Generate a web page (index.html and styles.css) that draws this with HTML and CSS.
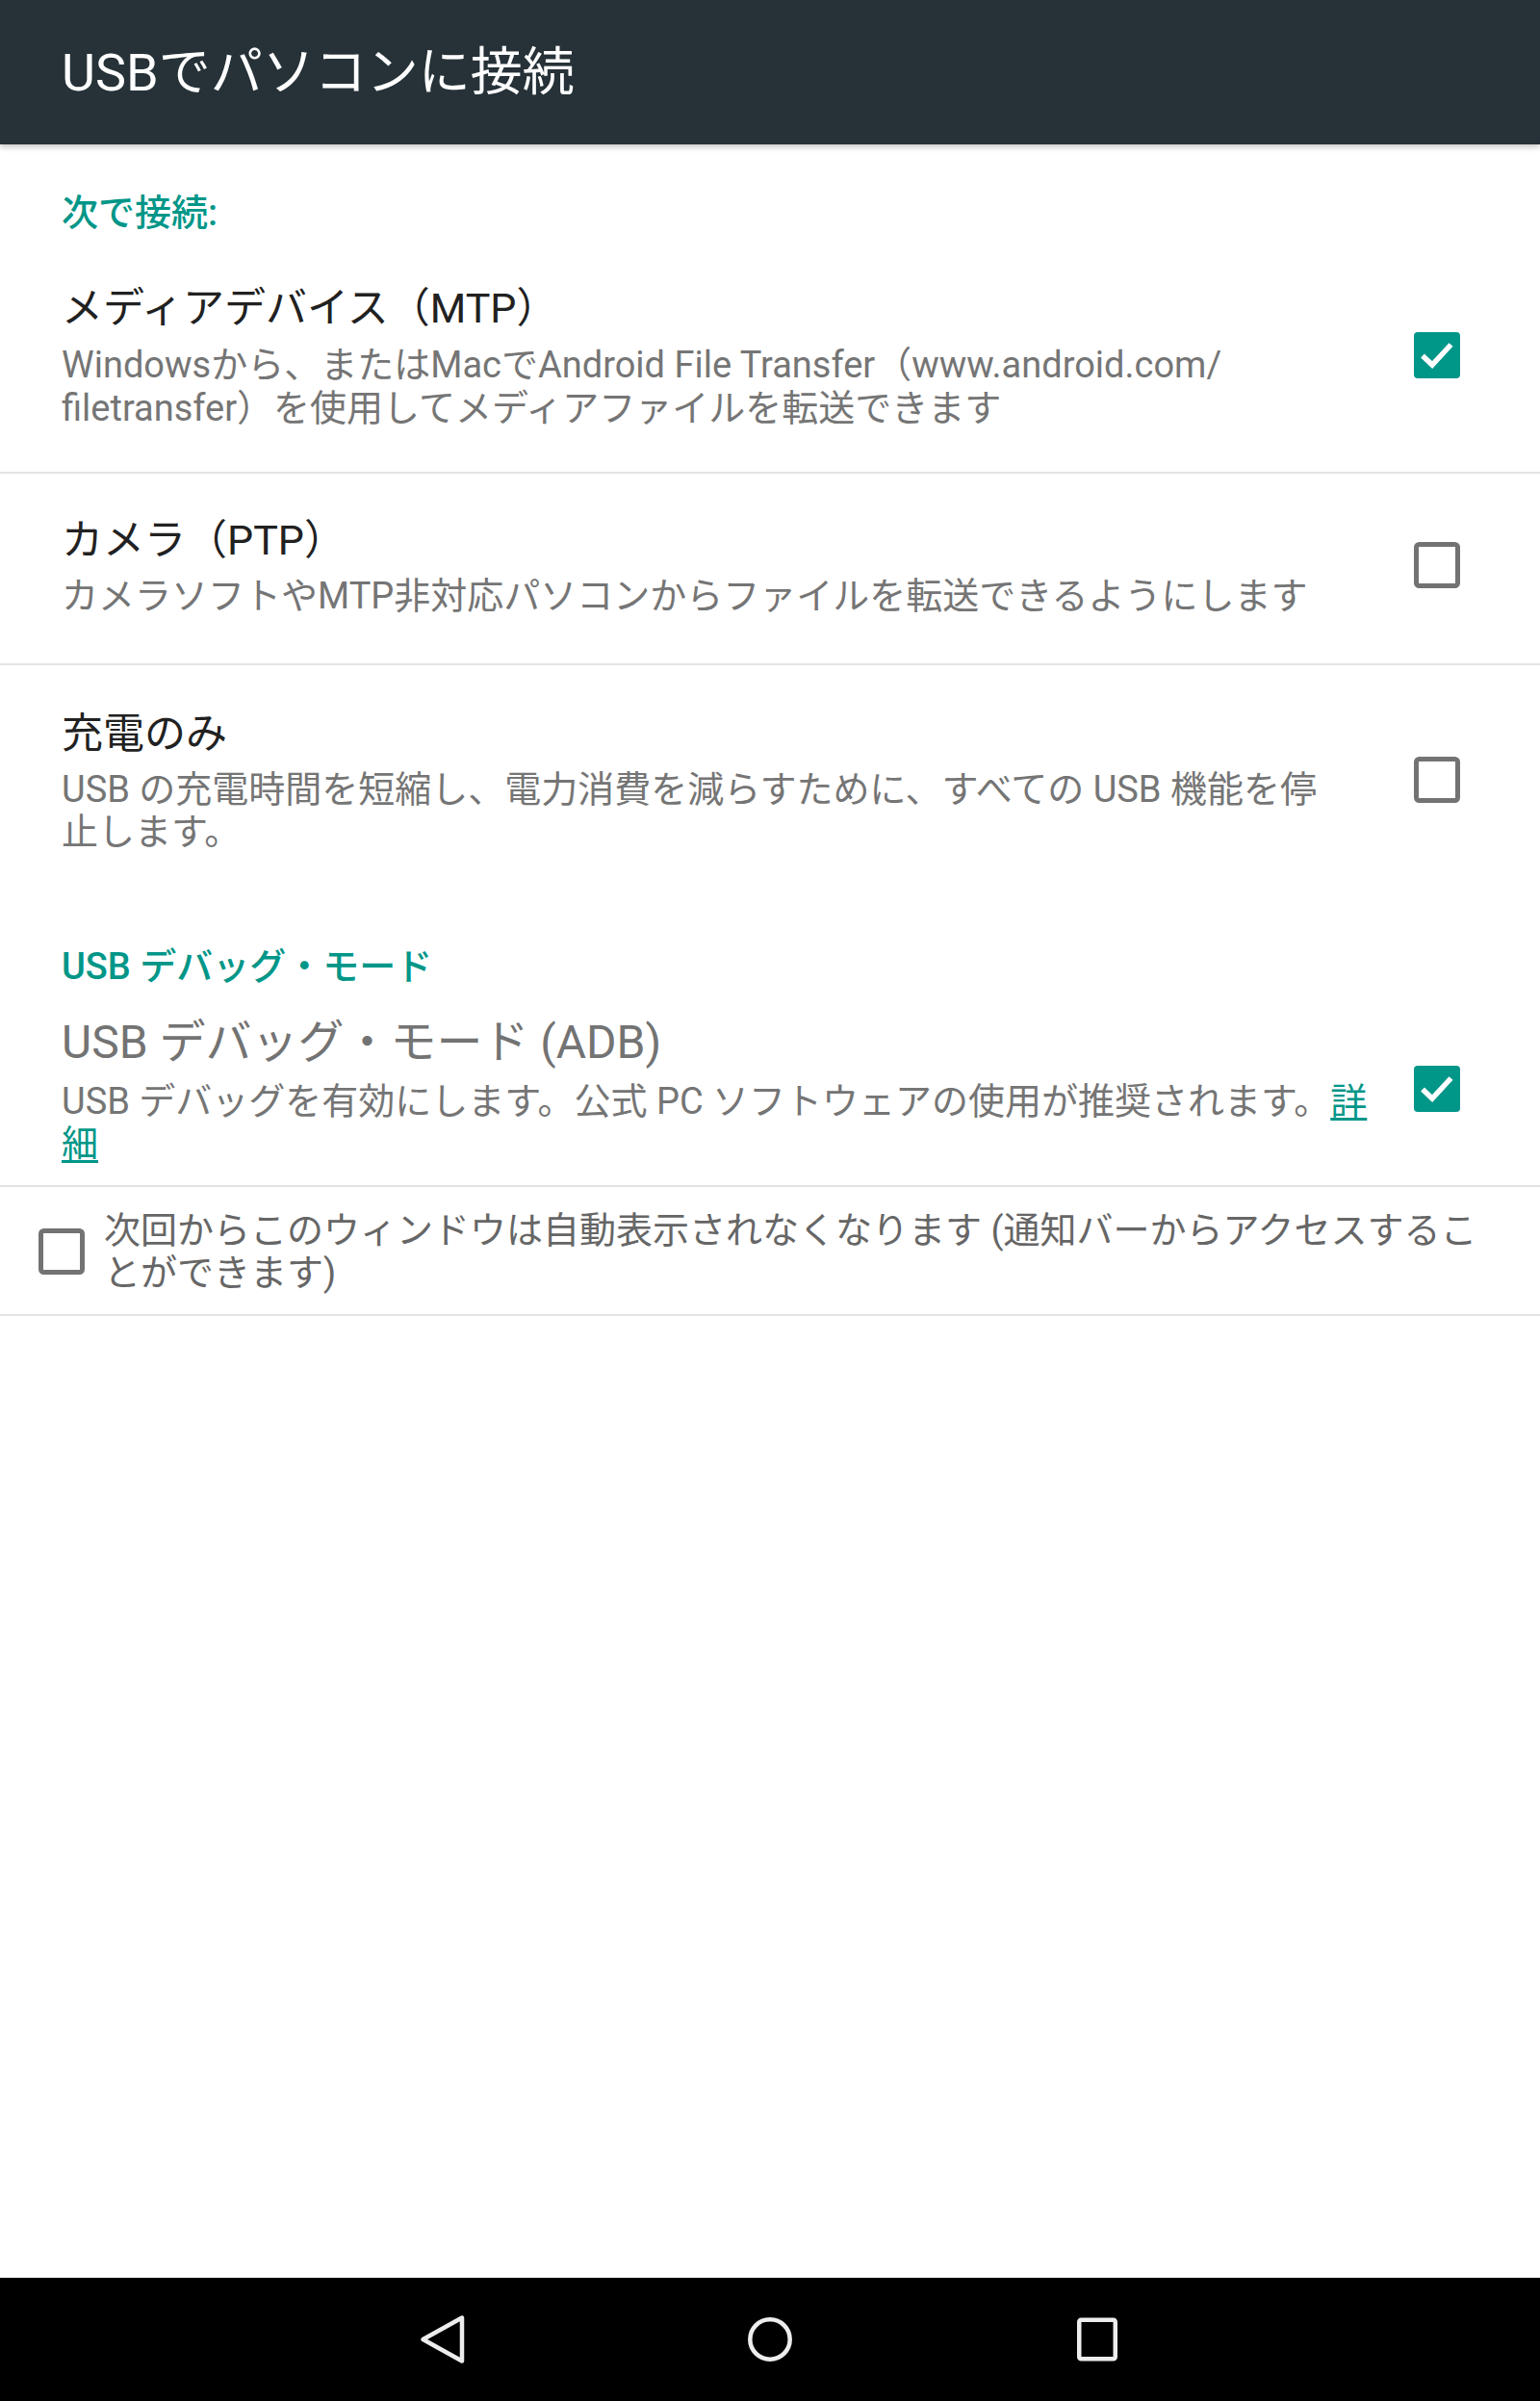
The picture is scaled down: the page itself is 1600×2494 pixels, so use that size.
FILE: index.html
```html
<!DOCTYPE html>
<html lang="ja">
<head>
<meta charset="utf-8">
<title>USBでパソコンに接続</title>
<link rel="stylesheet" href="styles.css">
</head>
<body>
<div class="screen">
  <header class="appbar"><h1 class="appbar-title">USBでパソコンに接続</h1></header>
  <main class="content">
    <div class="category c1">次で接続:</div>

    <div class="pref p1 sep">
      <div class="pref-text">
        <div class="pref-title">メディアデバイス（MTP）</div>
        <div class="pref-summary">Windowsから、またはMacでAndroid File Transfer（www.android.com/<br>filetransfer）を使用してメディアファイルを転送できます</div>
      </div>
      <svg class="cb" viewBox="0 0 48 48" width="48" height="48"><rect x="0" y="0" width="48" height="48" rx="4" fill="#009688"/><polyline points="9,24.5 19,34 38.5,13" fill="none" stroke="#fff" stroke-width="5.5"/></svg>
    </div>

    <div class="pref sep">
      <div class="pref-text">
        <div class="pref-title">カメラ（PTP）</div>
        <div class="pref-summary">カメラソフトやMTP非対応パソコンからファイルを転送できるようにします</div>
      </div>
      <svg class="cb" viewBox="0 0 48 48" width="48" height="48"><rect x="2.5" y="2.5" width="43" height="43" rx="3" fill="none" stroke="#737373" stroke-width="5"/></svg>
    </div>

    <div class="pref p3">
      <div class="pref-text">
        <div class="pref-title">充電のみ</div>
        <div class="pref-summary">USB の充電時間を短縮し、電力消費を減らすために、すべての USB 機能を停<br>止します。</div>
      </div>
      <svg class="cb" viewBox="0 0 48 48" width="48" height="48"><rect x="2.5" y="2.5" width="43" height="43" rx="3" fill="none" stroke="#737373" stroke-width="5"/></svg>
    </div>

    <div class="category c2">USB デバッグ・モード</div>

    <div class="pref adb sep">
      <div class="pref-text">
        <div class="pref-title adb-title">USB デバッグ・モード (ADB)</div>
        <div class="pref-summary">USB デバッグを有効にします。公式 PC ソフトウェアの使用が推奨されます。<a class="link" href="#">詳<br>細</a></div>
      </div>
      <svg class="cb" viewBox="0 0 48 48" width="48" height="48"><rect x="0" y="0" width="48" height="48" rx="4" fill="#009688"/><polyline points="9,24.5 19,34 38.5,13" fill="none" stroke="#fff" stroke-width="5.5"/></svg>
    </div>

    <div class="dontshow sep">
      <svg class="cb-left" viewBox="0 0 48 48" width="48" height="48"><rect x="2.5" y="2.5" width="43" height="43" rx="3" fill="none" stroke="#737373" stroke-width="5"/></svg>
      <div class="dontshow-text">次回からこのウィンドウは自動表示されなくなります (通知バーからアクセスするこ<br>とができます)</div>
    </div>
  </main>
  <nav class="navbar">
    <div class="navbtn">
      <svg viewBox="0 0 60 60" width="60" height="60"><polygon points="9.5,30 50,7.5 50,52.5" fill="none" stroke="#ededed" stroke-width="4.5" stroke-linejoin="round"/></svg>
    </div>
    <div class="navbtn">
      <svg viewBox="0 0 60 60" width="60" height="60"><circle cx="30" cy="30" r="20.7" fill="none" stroke="#ededed" stroke-width="4.5"/></svg>
    </div>
    <div class="navbtn">
      <svg viewBox="0 0 60 60" width="60" height="60"><rect x="11.25" y="9.75" width="37.5" height="40.5" rx="2" fill="none" stroke="#ededed" stroke-width="4.5"/></svg>
    </div>
  </nav>
</div>
</body>
</html>
```

FILE: styles.css
```css
html, body {
  margin: 0;
  padding: 0;
  background: #ffffff;
}
body {
  font-family: Roboto, "Noto Sans CJK JP", sans-serif;
  color: #212121;
}
.screen {
  width: 1600px;
  height: 2494px;
  display: flex;
  flex-direction: column;
  overflow: hidden;
}
.appbar {
  height: 150px;
  flex: none;
  box-sizing: border-box;
  background: #263238;
  display: flex;
  align-items: center;
  padding: 2px 0 0 64px;
  box-shadow: 0 3px 6px rgba(0, 0, 0, 0.22);
  position: relative;
  z-index: 2;
}
.appbar-title {
  margin: 0;
  font-size: 54px;
  font-weight: 400;
  color: #ffffff;
  line-height: 70px;
}
.content {
  flex: 1;
  background: #ffffff;
}
.category {
  font-size: 38px;
  line-height: 50px;
  height: 50px;
  color: #009688;
  font-weight: 500;
  padding-left: 64px;
}
.c1 { padding-top: 46px; }
.c2 { margin-top: 45px; }
.pref {
  display: flex;
  align-items: center;
  padding: 40px 83px 47px 64px;
}
.p1 { padding-top: 45px; padding-bottom: 44px; }
.p3 { padding-top: 42px; }
.adb { padding-top: 23px; padding-bottom: 20px; }
.sep { border-bottom: 2px solid #e3e3e3; }
.pref-text {
  flex: 1;
  min-width: 0;
}
.pref-title {
  font-size: 43px;
  line-height: 58px;
  color: #212121;
}
.adb-title {
  font-size: 48px;
  line-height: 62px;
  color: #737373;
}
.pref-summary {
  margin-top: 7px;
  font-size: 38px;
  line-height: 44.5px;
  color: #757575;
}
.p1 .pref-summary, .adb .pref-summary { margin-top: 8px; }
.link {
  color: #009688;
  text-decoration: underline;
  text-underline-offset: 4px;
}
.cb {
  flex: none;
  margin-left: 24px;
  display: block;
}
.dontshow {
  display: flex;
  align-items: center;
  padding: 23px 24px 21px 40px;
}
.cb-left {
  flex: none;
  display: block;
}
.dontshow-text {
  flex: 1;
  margin-left: 20px;
  font-size: 38px;
  line-height: 44px;
  color: #666666;
}
.navbar {
  flex: none;
  height: 128px;
  background: #000000;
  display: flex;
  justify-content: center;
  align-items: center;
  gap: 220px;
}
.navbtn {
  width: 120px;
  height: 128px;
  display: flex;
  align-items: center;
  justify-content: center;
}
.navbtn svg { display: block; }
```
